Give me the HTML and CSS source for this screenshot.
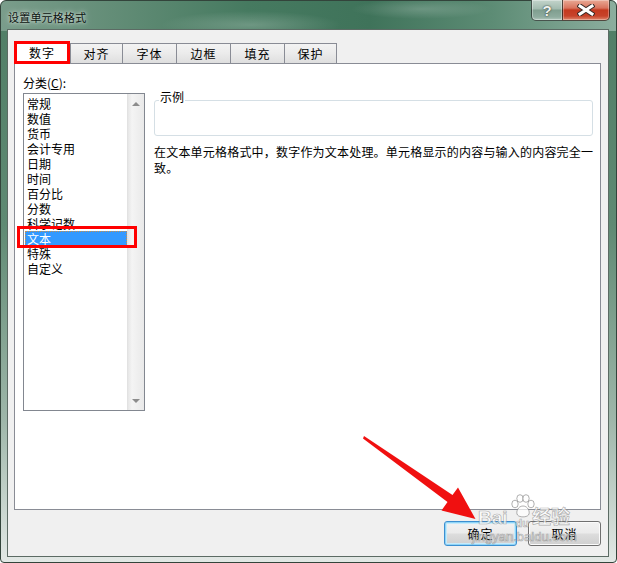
FILE: index.html
```html
<!DOCTYPE html>
<html>
<head lang="zh">
    <meta charset="UTF-8">
    <title>设置单元格格式</title>
    <link rel="stylesheet" href="styles.css">
</head>
<body>
<div class="window">
    <div class="titlebar">
        <span class="title">设置单元格格式</span>
        <div class="caption-btns">
            <span class="btn-help">?</span>
            <span class="btn-close">
                <svg width="18" height="12" viewBox="0 0 18 12">
                    <path d="M3 2 L15 10 M15 2 L3 10" stroke="#3a2a26" stroke-width="5" stroke-linecap="square"/>
                    <path d="M3 2 L15 10 M15 2 L3 10" stroke="#fff" stroke-width="3" stroke-linecap="square"/>
                </svg>
            </span>
        </div>
    </div>
    <div class="client">
        <div class="tabs">
            <span class="tab tab-active">数字</span>
            <span class="tab tab-w1">对齐</span>
            <span class="tab">字体</span>
            <span class="tab">边框</span>
            <span class="tab">填充</span>
            <span class="tab tab-w1">保护</span>
        </div>
        <div class="panel">
            <div class="col-left">
                <div class="label">分类(<u>C</u>):</div>
                <div class="listbox">
                    <ul class="items">
                        <li>常规</li>
                        <li>数值</li>
                        <li>货币</li>
                        <li>会计专用</li>
                        <li>日期</li>
                        <li>时间</li>
                        <li>百分比</li>
                        <li>分数</li>
                        <li>科学记数</li>
                        <li class="selected">文本</li>
                        <li>特殊</li>
                        <li>自定义</li>
                    </ul>
                    <div class="scrollbar">
                        <span class="arrow-up"></span>
                        <span class="arrow-down"></span>
                    </div>
                </div>
            </div>
            <div class="col-right">
                <div class="sample">
                    <div class="sample-label">示例</div>
                </div>
                <p class="desc">在文本单元格格式中，数字作为文本处理。单元格显示的内容与输入的内容完全一致。</p>
            </div>
        </div>
        <div class="buttons">
            <span class="btn btn-default">确定</span>
            <span class="btn">取消</span>
        </div>
    </div>

    <!-- 红色箭头 -->
    <svg class="arrow" width="120" height="92" viewBox="360 430 120 92">
        <polygon points="364,436 452.5,495 458,487.5 475.5,519 441.5,510.5 447.5,502 363,438.5" fill="#f01010"/>
    </svg>

    <div class="watermark">
        <div class="wm-big">Bai<span class="paw">
            <svg width="26" height="24" viewBox="0 0 26 24">
                <g fill="rgba(255,255,255,.7)" stroke="rgba(100,100,100,.5)" stroke-width="1">
                    <ellipse cx="5" cy="10" rx="3.2" ry="3.8"/>
                    <ellipse cx="10" cy="4.5" rx="3.2" ry="3.8"/>
                    <ellipse cx="16" cy="4.5" rx="3.2" ry="3.8"/>
                    <ellipse cx="21" cy="10" rx="3.2" ry="3.8"/>
                    <path d="M13 12 C8 12 5.5 18 7.5 21 C9.5 23.5 16.5 23.5 18.5 21 C20.5 18 18 12 13 12 Z"/>
                </g>
            </svg></span><span class="du">du</span>经验</div>
        <div class="wm-url">jingyan.baidu.com</div>
    </div>
</div>
</body>
</html>
```

FILE: styles.css
```css
* {
    margin: 0;
    padding: 0;
    box-sizing: border-box;
}
body {
    width: 617px;
    height: 563px;
    overflow: hidden;
    background-color: #fff;
    font-family: "Noto Sans CJK SC", "Liberation Sans", sans-serif;
    font-size: 12px;
    color: #000;
}
.window {
    position: relative;
    width: 617px;
    height: 563px;
    border: 1px solid #33443b;
    border-radius: 6px 6px 4px 4px;
    padding: 0 7px 6px 6px;
    background:
        radial-gradient(ellipse 90px 14px at 250px 24px, rgba(255, 255, 255, .22), rgba(255, 255, 255, 0)) 0 0 / 100% 30px no-repeat,
        radial-gradient(ellipse 70px 10px at 420px 8px, rgba(255, 255, 255, .18), rgba(255, 255, 255, 0)) 0 0 / 100% 30px no-repeat,
        linear-gradient(to right, #7a9d8b 0%, #638d77 18%, #467a60 40%, #3f735a 60%, #5d8c75 80%, #8cae9e 100%) 0 0 / 100% 30px no-repeat,
        linear-gradient(to bottom, #4f7d65 0%, #5f8a73 40%, #9fb7aa 75%, #e2e8e5 100%);
}
.titlebar {
    display: flex;
    justify-content: space-between;
    height: 28px;
    padding-left: 1px;
}
.title {
    font-size: 11px;
    line-height: 32px;
    letter-spacing: 0.2px;
    color: #0c1410;
    text-shadow: 0 0 6px rgba(255, 255, 255, .75), 0 0 3px rgba(255, 255, 255, .6);
}
.caption-btns {
    display: flex;
    margin-top: -1px;
    margin-right: -1px;
    height: 21px;
}
.btn-help, .btn-close {
    display: flex;
    align-items: center;
    justify-content: center;
    border: 1px solid rgba(30, 40, 35, .75);
    border-top: none;
}
.btn-help {
    width: 31px;
    border-radius: 0 0 0 5px;
    border-right: none;
    background: linear-gradient(to bottom, #c3d4cb 0%, #a2bbaf 45%, #7f9e8f 50%, #8fac9f 85%, #b3c8be 100%);
    box-shadow: inset 0 0 0 1px rgba(255, 255, 255, .35);
    font-family: "Liberation Sans", sans-serif;
    font-weight: bold;
    font-size: 15px;
    color: #eef2ef;
    text-shadow: 0 0 2px #3c4a44, 0 0 1px #3c4a44;
}
.btn-close {
    width: 48px;
    border-radius: 0 0 5px 0;
    background: linear-gradient(to bottom, #e9a995 0%, #d9745e 40%, #c4391f 50%, #c7432a 80%, #e0876d 100%);
    box-shadow: inset 0 0 0 1px rgba(255, 255, 255, .3);
}
.client {
    display: flex;
    flex-direction: column;
    height: 528px;
    border: 1px solid #5c6b64;
    background-color: #f0f0f0;
    padding: 11px 7px 9px 6px;
}
/* 选项卡 */
.tabs {
    display: flex;
    align-items: flex-end;
    height: 22px;
    position: relative;
    z-index: 2;
}
.tab {
    width: 55px;
    height: 20px;
    margin-left: -1px;
    border: 1px solid #898c95;
    border-bottom: none;
    background: linear-gradient(to bottom, #f3f3f3 0%, #ebebeb 50%, #dedede 100%);
    text-align: center;
    line-height: 19px;
    letter-spacing: 1px;
}
.tab-w1 {
    width: 53px;
}
.tab-active {
    width: 56px;
    height: 23px;
    margin-left: 0;
    margin-right: 1px;
    margin-bottom: -1px;
    border: 3px solid #f00;
    background: #fff;
    line-height: 18px;
}
.panel {
    display: flex;
    height: 447px;
    border: 1px solid #898c95;
    background-color: #fff;
    padding: 11px 7px 0 8px;
}
.col-left {
    width: 122px;
}
.label {
    line-height: 15px;
}
.listbox {
    display: flex;
    height: 318px;
    margin-top: 3px;
    border: 1px solid #828790;
}
.items {
    flex: 1;
    list-style: none;
    padding: 2px 0 0 1px;
}
.items li {
    line-height: 15px;
    padding-left: 2px;
}
.items .selected {
    position: relative;
    background-color: #3399ff;
    color: #fff;
    outline: 1px dotted #c8904a;
    outline-offset: -1px;
}
.items .selected:after {
    content: "";
    position: absolute;
    left: -8px;
    right: -10px;
    top: -5px;
    bottom: -2px;
    border: 3px solid #f00;
}
.scrollbar {
    display: flex;
    flex-direction: column;
    justify-content: space-between;
    align-items: center;
    width: 17px;
    padding: 8px 0 7px;
    background: linear-gradient(to right, #e6e6e6 0%, #f4f4f4 25%, #efefef 60%, #e9e9e9 100%);
    border-left: 1px solid #e2e2e2;
}
.arrow-up, .arrow-down {
    width: 0;
    height: 0;
    border-left: 4px solid transparent;
    border-right: 4px solid transparent;
}
.arrow-up {
    border-bottom: 4px solid #8c8c8c;
}
.arrow-down {
    border-top: 4px solid #8c8c8c;
}
.col-right {
    flex: 1;
    margin-left: 9px;
}
.sample {
    height: 36px;
    margin-top: 25px;
    border: 1px solid #d5dfe5;
    border-radius: 3px;
}
.sample-label {
    width: fit-content;
    margin: -11px 0 0 4px;
    padding: 0 1px;
    background-color: #fff;
    line-height: 14px;
}
.desc {
    margin-top: 8px;
    margin-right: -6px;
    line-height: 16px;
    letter-spacing: 0.2px;
}
/* 按钮 */
.buttons {
    display: flex;
    justify-content: flex-end;
    gap: 11px;
    margin-top: 11px;
}
.btn {
    width: 73px;
    height: 25px;
    border: 1px solid #707070;
    border-radius: 3px;
    background: linear-gradient(to bottom, #f2f2f2 0%, #ebebeb 48%, #dddddd 52%, #cfcfcf 100%);
    box-shadow: inset 0 0 0 1px #fbfbfb;
    text-align: center;
    line-height: 23px;
    letter-spacing: 1px;
}
.btn-default {
    border-color: #3c8fd0;
    box-shadow: inset 0 0 0 1px #8fd4f6, inset 0 0 0 2px #c6eafb;
}
.arrow {
    position: absolute;
    left: 359px;
    top: 429px;
}
.watermark {
    position: absolute;
    left: 471px;
    top: 492px;
    color: rgba(255, 255, 255, .7);
    -webkit-text-stroke: 0.7px rgba(100, 100, 100, .5);
    font-family: "Liberation Sans", "Noto Sans CJK SC", sans-serif;
}
.wm-big {
    display: flex;
    align-items: flex-end;
    padding-left: 6px;
    font-size: 19px;
    font-weight: bold;
    line-height: 22px;
    height: 36px;
}
.paw {
    margin: 0 0 6px 2px;
}
.du {
    font-size: 11px;
    line-height: 12px;
    margin: 0 3px 0 -20px;
}
.wm-url {
    font-size: 13px;
    line-height: 16px;
}
```
